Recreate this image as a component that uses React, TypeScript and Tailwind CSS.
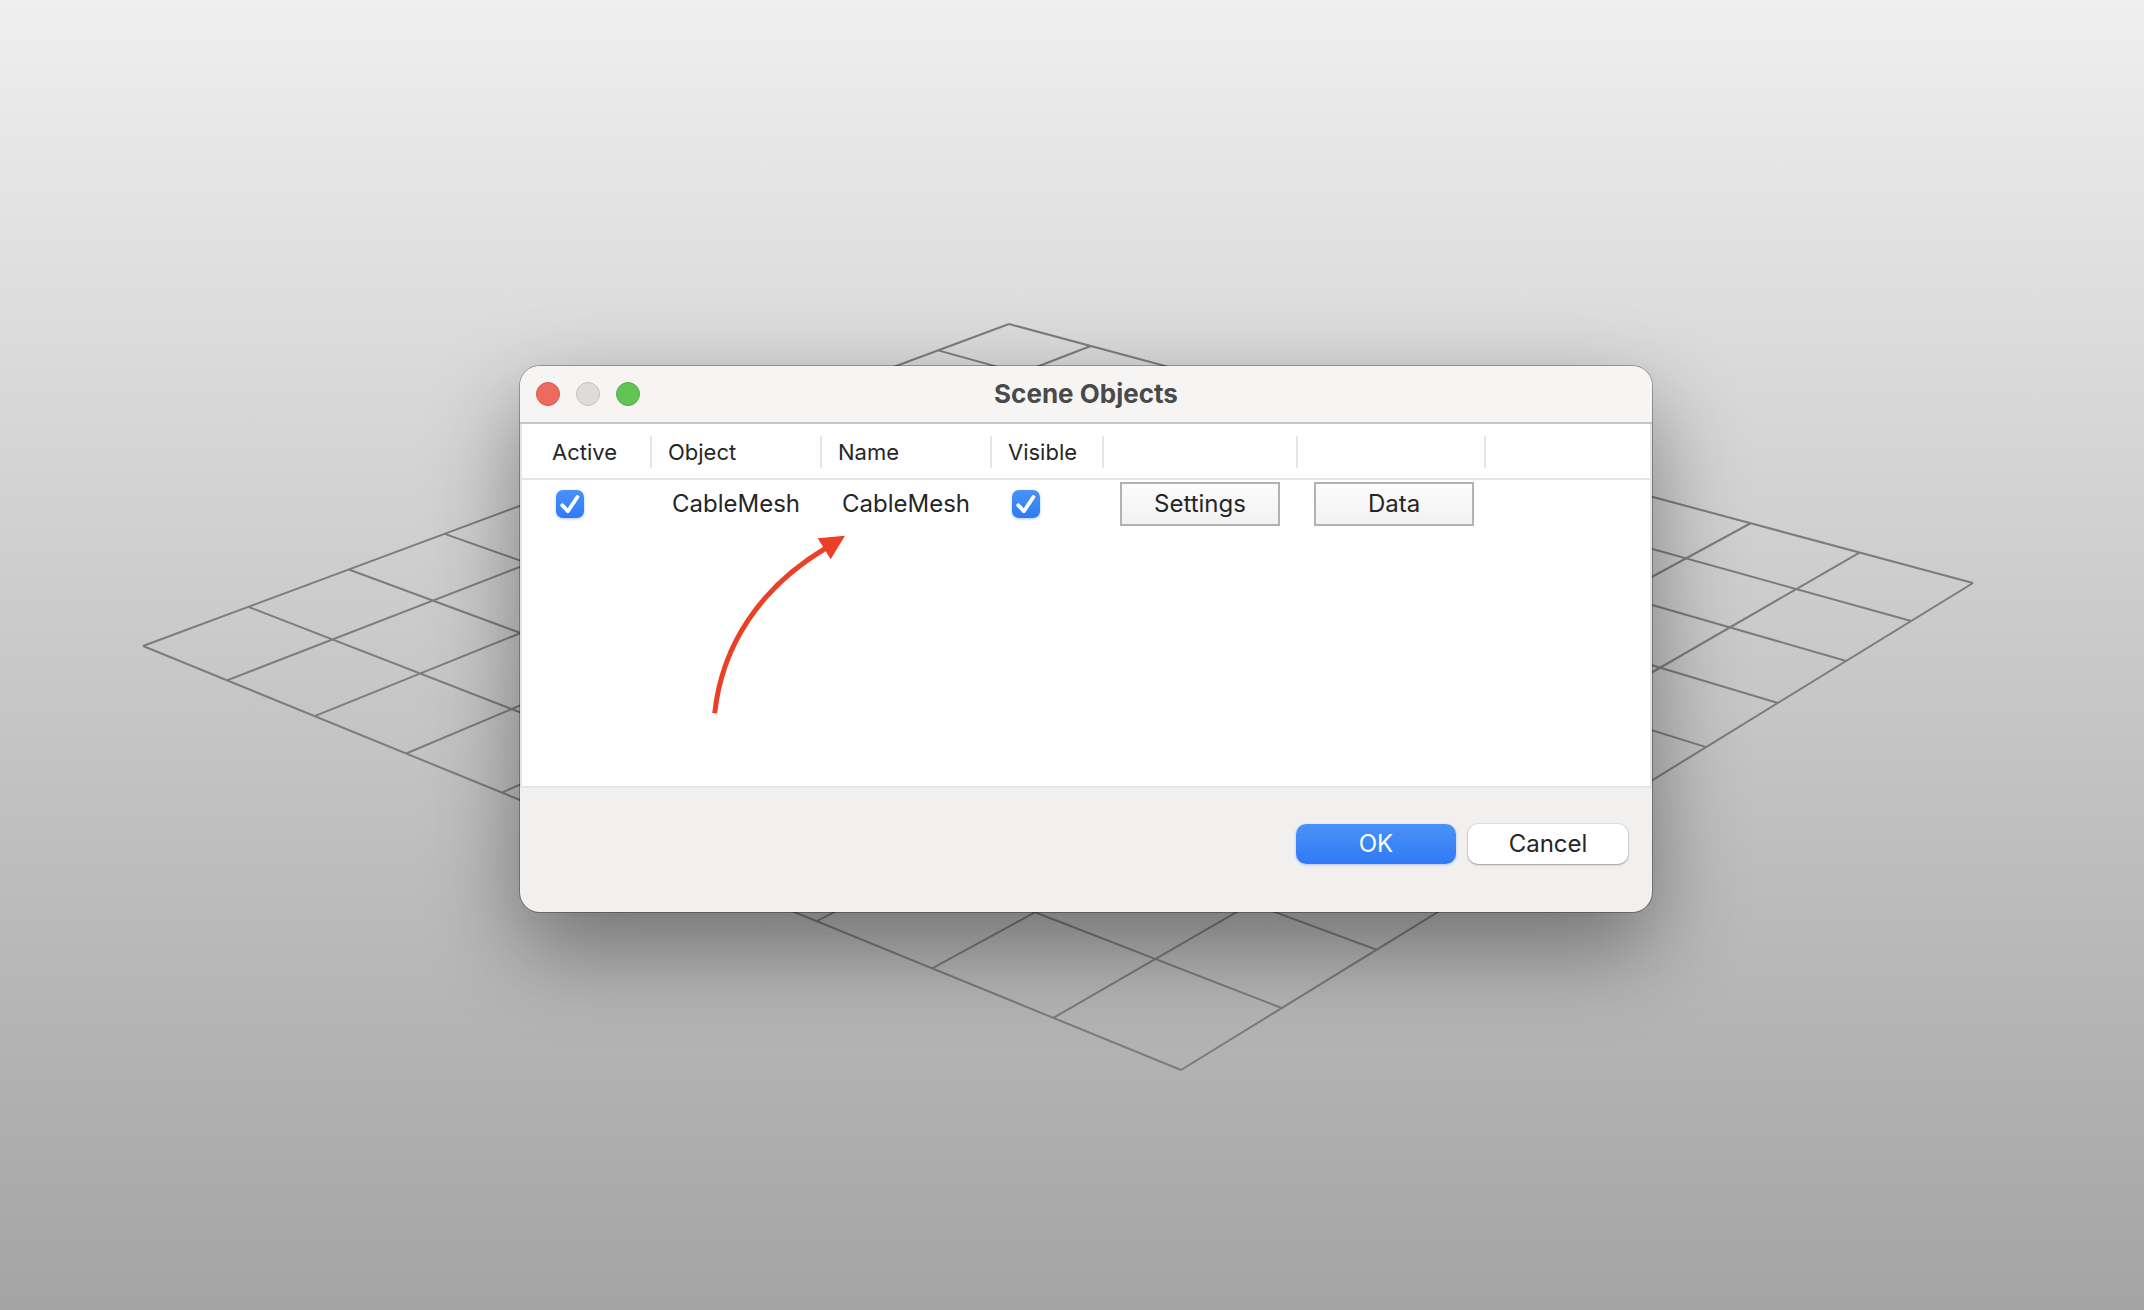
import React, { useState } from "react";

type Point = [number, number];

// Corners of the ground plane: left, far, right, near.
const CORNERS: [Point, Point, Point, Point] = [
  [143, 646],
  [1009, 324],
  [1973, 583],
  [1181, 1070],
];
const CELLS = 10;

// Projects a point of the unit square onto the ground plane.
function project(u: number, v: number): Point {
  const [[x0, y0], [x1, y1], [x2, y2], [x3, y3]] = CORNERS;
  const dx1 = x1 - x2;
  const dx2 = x3 - x2;
  const dy1 = y1 - y2;
  const dy2 = y3 - y2;
  const sx = x0 - x1 + x2 - x3;
  const sy = y0 - y1 + y2 - y3;
  const det = dx1 * dy2 - dx2 * dy1;
  const g = (sx * dy2 - dx2 * sy) / det;
  const h = (dx1 * sy - sx * dy1) / det;
  const w = g * u + h * v + 1;
  return [
    ((x1 - x0 + g * x1) * u + (x3 - x0 + h * x3) * v + x0) / w,
    ((y1 - y0 + g * y1) * u + (y3 - y0 + h * y3) * v + y0) / w,
  ];
}

function GroundGrid() {
  const steps = Array.from({ length: CELLS + 1 }, (_, i) => i / CELLS);
  const d = steps
    .flatMap((t) => [
      [project(t, 0), project(t, 1)],
      [project(0, t), project(1, t)],
    ])
    .map(([a, b]) => `M${a[0]} ${a[1]}L${b[0]} ${b[1]}`)
    .join("");
  return (
    <svg
      aria-hidden="true"
      className="absolute inset-0 h-full w-full"
      viewBox="0 0 2144 1310"
      preserveAspectRatio="xMidYMid slice"
    >
      <path d={d} fill="none" stroke="#7c7c7c" strokeWidth="2" />
    </svg>
  );
}

function Tick({ label }: { label: string }) {
  const [on, setOn] = useState(true);
  return (
    <span className="relative block size-7">
      <input
        type="checkbox"
        aria-label={label}
        checked={on}
        onChange={() => setOn(!on)}
        className="block size-7 appearance-none rounded-[7px] bg-white shadow-[0_1px_2px_rgba(0,0,0,0.3)] checked:bg-linear-to-b checked:from-[#4a92f8] checked:to-[#2f7af6] checked:shadow-[0_1px_3px_rgba(47,122,246,0.4)]"
      />
      {on && (
        <svg
          aria-hidden="true"
          className="pointer-events-none absolute inset-0 size-7"
          viewBox="0 0 28 28"
          fill="none"
          stroke="white"
          strokeWidth="3.8"
          strokeLinecap="round"
          strokeLinejoin="round"
        >
          <path d="M6.3 15.2 11.9 21.2 21.4 7" />
        </svg>
      )}
    </span>
  );
}

function Heading({ children, first }: { children?: React.ReactNode; first?: boolean }) {
  return (
    <th scope="col" className="border-b-2 border-[#e5e5e5] p-0 pt-3 pb-2.5 font-normal">
      <div
        className={
          first
            ? "h-8 border-r-2 border-[#e5e5e5] pl-[30px] text-left text-[22px] leading-8"
            : "h-8 border-r-2 border-[#e5e5e5] pl-4 text-left text-[22px] leading-8"
        }
      >
        {children}
      </div>
    </th>
  );
}

function CellButton({ children }: { children: React.ReactNode }) {
  return (
    <button
      type="button"
      className="block h-11 w-40 border-2 border-[#b2b2b2] bg-linear-to-b from-[#fcfcfc] to-[#f2f2f2] text-2xl leading-10"
    >
      {children}
    </button>
  );
}

function Arrow() {
  return (
    <svg
      aria-hidden="true"
      className="pointer-events-none absolute top-[108px] left-[186px] h-[188px] w-[144px]"
      viewBox="0 0 144 188"
    >
      <path d="M6.7 181.3C14 112 53 55 118 16" fill="none" stroke="#ec4026" strokeWidth="5" />
      <path d="M109.7 6.3 137 3.7 122.7 27.3Z" fill="#ec4026" />
    </svg>
  );
}

export default function App() {
  return (
    <main className="relative flex min-h-screen items-center justify-center bg-linear-to-b from-[#efefef] to-[#a4a4a4] pb-8 pl-7 font-['Inter','Liberation_Sans',sans-serif] text-[#262626]">
      <GroundGrid />
      <section
        role="dialog"
        aria-labelledby="dialog-title"
        className="relative w-full max-w-[1132px] overflow-hidden rounded-[20px] bg-[#f1f0ef] shadow-[0_0_0_1px_rgba(0,0,0,0.28),0_36px_90px_rgba(0,0,0,0.4)]"
      >
        <header className="grid h-[58px] grid-cols-[1fr_auto_1fr] items-center border-b-2 border-[#c6c6c6] bg-[#f6f5f4] px-4">
          <div className="flex gap-4">
            <button
              type="button"
              aria-label="Close"
              className="size-6 rounded-full border border-[#d9574b] bg-[#ed6a5f]"
            />
            <button
              type="button"
              aria-label="Minimize"
              className="size-6 rounded-full border border-[#c4c3c2] bg-[#dddcdb]"
            />
            <button
              type="button"
              aria-label="Zoom"
              className="size-6 rounded-full border border-[#53ad43] bg-[#61c454]"
            />
          </div>
          <h1 id="dialog-title" className="text-[26px] leading-8 font-bold text-[#4a4a4a]">
            Scene Objects
          </h1>
        </header>

        <div className="relative min-h-[364px] border-x-2 border-b-2 border-[#e5e5e5] bg-white">
          <table className="w-full table-fixed border-separate border-spacing-0">
            <colgroup>
              <col className="w-[130px]" />
              <col className="w-[170px]" />
              <col className="w-[170px]" />
              <col className="w-[112px]" />
              <col className="w-[194px]" />
              <col className="w-[188px]" />
              <col />
            </colgroup>
            <thead>
              <tr>
                <Heading first>Active</Heading>
                <Heading>Object</Heading>
                <Heading>Name</Heading>
                <Heading>Visible</Heading>
                <Heading />
                <Heading />
                <td className="border-b-2 border-[#e5e5e5]" />
              </tr>
            </thead>
            <tbody>
              <tr className="h-12 text-2xl">
                <td className="p-0 pl-[34px]">
                  <Tick label="Active" />
                </td>
                <td className="p-0 pl-5">CableMesh</td>
                <td className="p-0 pl-5">CableMesh</td>
                <td className="p-0 pl-5">
                  <Tick label="Visible" />
                </td>
                <td className="p-0 pl-4">
                  <CellButton>Settings</CellButton>
                </td>
                <td className="p-0 pl-4">
                  <CellButton>Data</CellButton>
                </td>
                <td />
              </tr>
            </tbody>
          </table>
          <Arrow />
        </div>

        <footer className="flex justify-end gap-3 px-6 pt-9 pb-12 text-2xl">
          <button
            type="button"
            className="h-10 w-40 rounded-[10px] bg-linear-to-b from-[#4a92f8] to-[#2f7af6] leading-10 text-white shadow-[0_1px_3px_rgba(47,122,246,0.35)]"
          >
            OK
          </button>
          <button
            type="button"
            className="h-10 w-40 rounded-[10px] bg-white leading-10 shadow-[0_0_0_1px_rgba(0,0,0,0.06),0_1px_2px_rgba(0,0,0,0.3)]"
          >
            Cancel
          </button>
        </footer>
      </section>
    </main>
  );
}
